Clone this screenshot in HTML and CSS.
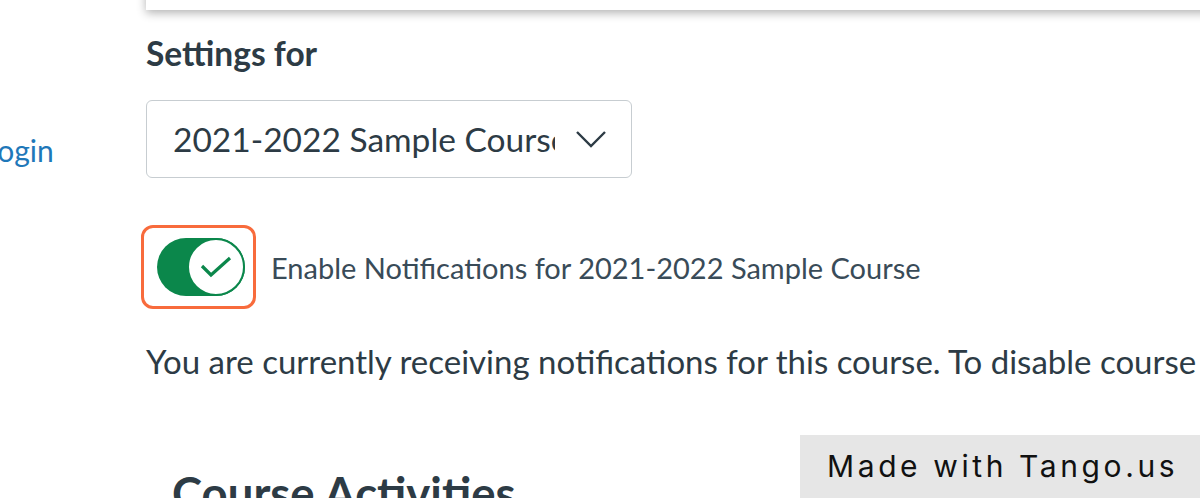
FILE: index.html
```html
<!DOCTYPE html>
<html lang="en">
<head>
  <meta charset="UTF-8" />
  <title>Notification Settings</title>
  <link rel="stylesheet" href="styles.css">
</head>
<body>
  <div class="page">
    <!-- barra lateral con el enlace -->
    <nav class="side-nav">
      <a href="#" class="side-link">Login</a>
    </nav>

    <main class="content">
      <div class="top-card"></div>

      <h2 class="settings-title">Settings for</h2>

      <div class="course-select">
        <span class="course-select-text">2021-2022 Sample Course</span>
        <svg class="chevron" width="32" height="20" viewBox="0 0 32 20">
          <path d="M2 3 L16 17 L30 3" fill="none" stroke="#2d3b45" stroke-width="2.4" />
        </svg>
      </div>

      <div class="toggle-row">
        <div class="toggle-focus">
          <div class="toggle-track">
            <div class="toggle-knob">
              <svg width="32" height="24" viewBox="0 0 32 24">
                <path d="M2 11 L11 20 L30 3" fill="none" stroke="#0b874b" stroke-width="3.2" />
              </svg>
            </div>
          </div>
        </div>
        <label class="toggle-label">Enable Notifications for 2021-2022 Sample Course</label>
      </div>

      <p class="status-text">You are currently receiving notifications for this course. To disable course notifications, use the toggle above.</p>

      <h3 class="section-title">Course Activities</h3>
    </main>
  </div>

  <!-- marca de agua -->
  <div class="watermark">Made with Tango.us</div>
</body>
</html>
```

FILE: styles.css
```css
body {
  margin: 0;
  background: #fff;
  font-family: Lato, 'Noto Sans', sans-serif;
  color: #2d3b45;
  overflow: hidden;
  height: 498px;
}

.page {
  display: flex;
  width: 1600px;
}

.side-nav {
  width: 146px;
  flex-shrink: 0;
  padding-top: 132px;
}

.side-link {
  display: block;
  margin-left: -17px;
  font-size: 30px;
  color: #1f78b9;
  text-decoration: none;
}

.content {
  flex: 1;
}

.top-card {
  height: 40px;
  margin-top: -30px;
  background: #fff;
  box-shadow: 0 3px 9px rgba(0, 0, 0, 0.3);
}

.settings-title {
  margin: 23px 0 0;
  font-size: 33.5px;
  font-weight: 700;
  line-height: 40px;
  color: #2d3b45;
}

.course-select {
  margin-top: 27px;
  width: 486px;
  height: 78px;
  border: 1px solid #c7cdd1;
  border-radius: 6px;
  box-sizing: border-box;
  display: flex;
  align-items: center;
  padding: 0 24px 0 26px;
  gap: 20px;
}

.course-select-text {
  width: 383px;
  font-size: 33.5px;
  white-space: nowrap;
  overflow: hidden;
}

.chevron {
  flex-shrink: 0;
}

.toggle-row {
  margin-top: 47px;
  margin-left: -5px;
  display: flex;
  align-items: center;
  gap: 15px;
}

.toggle-focus {
  width: 115px;
  height: 84px;
  box-sizing: border-box;
  border: 3px solid #f86b3c;
  border-radius: 12px;
  display: flex;
  align-items: center;
  justify-content: center;
  padding-left: 4px;
}

.toggle-track {
  width: 88px;
  height: 58px;
  border-radius: 29px;
  background: #0b874b;
  display: flex;
  justify-content: flex-end;
  align-items: center;
}

.toggle-knob {
  width: 58px;
  height: 58px;
  box-sizing: border-box;
  border-radius: 50%;
  background: #fff;
  border: 2px solid #0b874b;
  display: flex;
  align-items: center;
  justify-content: center;
}

.toggle-label {
  font-size: 29px;
  color: #394b58;
}

.status-text {
  margin: 30px 0 0;
  font-size: 33px;
  line-height: 44px;
  white-space: nowrap;
}

.section-title {
  margin: 82px 0 0 26px;
  font-size: 45.5px;
  font-weight: 700;
}

.watermark {
  position: absolute;
  left: 800px;
  top: 435px;
  width: 400px;
  height: 63px;
  background: #e6e6e6;
  color: #111;
  font-family: Inter, 'DejaVu Sans', sans-serif;
  font-size: 30px;
  letter-spacing: 3.6px;
  line-height: 63px;
  padding-left: 27px;
  box-sizing: border-box;
}
```
